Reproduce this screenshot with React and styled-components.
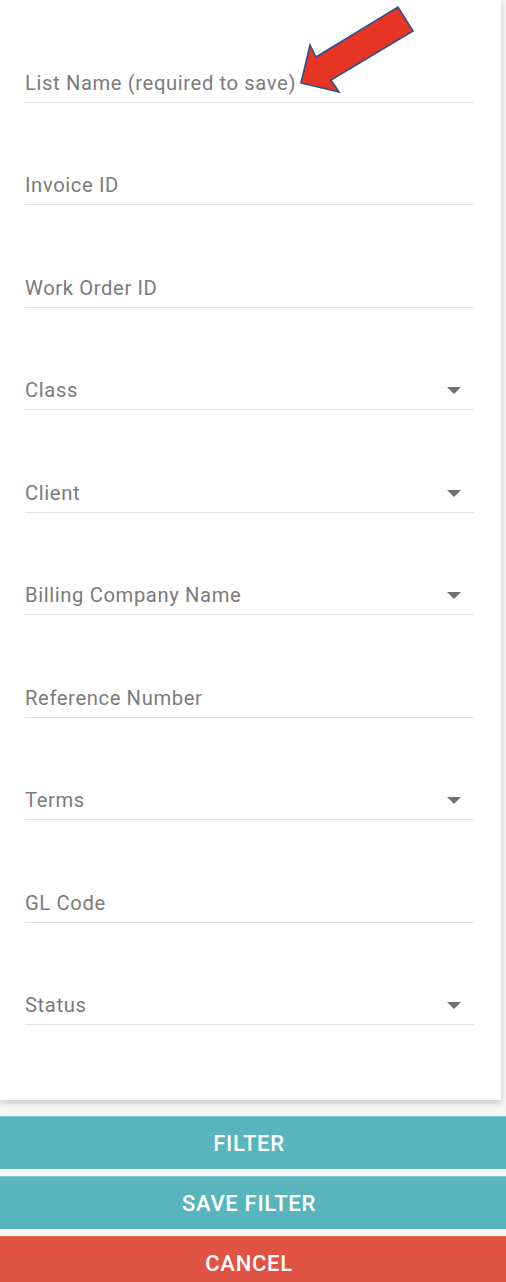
import React from 'react';
import styled, { createGlobalStyle } from 'styled-components';

const GlobalStyle = createGlobalStyle`
  html, body {
    margin: 0;
    padding: 0;
    background: #f6f6f6;
    overflow: hidden;
  }
  body {
    font-family: Roboto, 'Liberation Sans', sans-serif;
  }
`;

const Page = styled.div`
  position: relative;
  width: 506px;
  height: 1282px;
  overflow: hidden;
`;

const Card = styled.div`
  width: 501px;
  height: 1100px;
  background: #fff;
  overflow: hidden;
  box-shadow: 0 2px 7px rgba(0, 0, 0, 0.22);
`;

const Field = styled.div`
  box-sizing: border-box;
  height: 102.5px;
  margin: 0 27px 0 25px;
  padding: 0 13px 7px 0;
  display: flex;
  align-items: flex-end;
  justify-content: space-between;
  border-bottom: 1px solid #e2e2e2;
`;

const Label = styled.span`
  font-size: 20.2px;
  line-height: 24px;
  letter-spacing: 0.62px;
  color: #7b7b7b;
  white-space: nowrap;
`;

const Caret = styled.svg`
  width: 14px;
  height: 7px;
  margin-bottom: 8px;
  fill: #707070;
`;

const Actions = styled.div`
  margin-top: 16px;
  display: flex;
  flex-direction: column;
  gap: 7px;
`;

const ActionButton = styled.button`
  box-sizing: border-box;
  height: 53px;
  width: 100%;
  border: none;
  border-top: 1px solid ${p => (p.$danger ? '#e86a5c' : '#7fcad0')};
  padding: 0 8px 0 0;
  background: ${p => (p.$danger ? '#e05343' : '#58b5bd')};
  color: #fff;
  font-family: Roboto, 'Liberation Sans', sans-serif;
  font-size: 22px;
  font-weight: 500;
  letter-spacing: 0.7px;
  text-transform: uppercase;
  cursor: pointer;
`;

const Pointer = styled.svg`
  position: absolute;
  left: 0;
  top: 0;
  width: 506px;
  height: 120px;
  pointer-events: none;
`;

const fields = [
  { label: 'List Name (required to save)' },
  { label: 'Invoice ID' },
  { label: 'Work Order ID' },
  { label: 'Class', select: true },
  { label: 'Client', select: true },
  { label: 'Billing Company Name', select: true },
  { label: 'Reference Number' },
  { label: 'Terms', select: true },
  { label: 'GL Code' },
  { label: 'Status', select: true },
  { label: 'Invoice Date From' },
];

export default function App() {
  return (
    <>
      <GlobalStyle />
      <Page>
        <Card>
          {fields.map(f => (
            <Field key={f.label}>
              <Label>{f.label}</Label>
              {f.select && (
                <Caret viewBox="0 0 14 7">
                  <path d="M0 0h14L7 7z" />
                </Caret>
              )}
            </Field>
          ))}
        </Card>
        <Actions>
          <ActionButton>Filter</ActionButton>
          <ActionButton>Save Filter</ActionButton>
          <ActionButton $danger>Cancel</ActionButton>
        </Actions>
        <Pointer viewBox="0 0 506 120">
          <polygon
            points="301,83 310,45 316,57 398,7 413,31 331,80 339,92"
            fill="#e63524"
            stroke="#2f4f8f"
            strokeWidth="1.6"
            strokeLinejoin="miter"
          />
        </Pointer>
      </Page>
    </>
  );
}
